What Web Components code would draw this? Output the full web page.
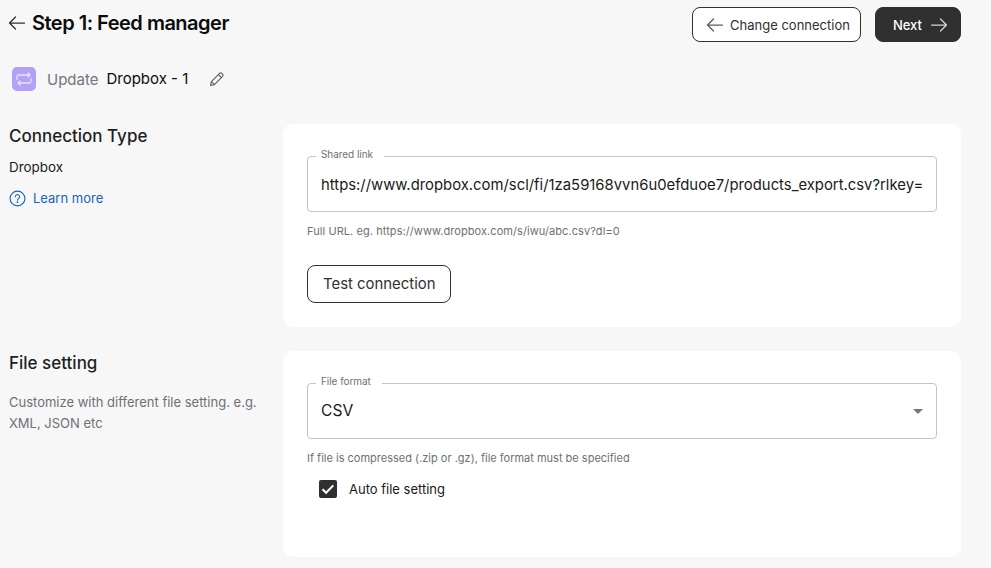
<!DOCTYPE html>
<html>
<head>
<meta charset="utf-8">
<style>
  html, body { margin: 0; background: #f7f7f7; }
  body { font-family: Inter, "Liberation Sans", sans-serif; color: #1a1a1a; }
</style>
</head>
<body>
<x-page>
  <x-topbar slot="top" title="Step 1: Feed manager"></x-topbar>
  <x-section heading="Connection Type" slot="sections">
    <div slot="side" style="font-size:13.4px;font-weight:400;line-height:18px;margin-top:10px;color:#1a1a1a">Dropbox</div>
    <x-learn-more slot="side"></x-learn-more>
    <x-field label="Shared link" notch="68" value="https://www.dropbox.com/scl/fi/1za59168vvn6u0efduoe7/products_export.csv?rlkey=" size="14.85" shift="2"></x-field>
    <x-help style="letter-spacing:.07px">Full URL. eg. https://www.dropbox.com/s/iwu/abc.csv?dl=0</x-help>
    <x-button style="margin-top:26px">Test connection</x-button>
  </x-section>
  <x-section heading="File setting" slot="sections" style="margin-top:24px" min="206">
    <div slot="side" style="font-size:13px;line-height:21px;margin-top:17px;color:#6d7175;width:256px">Customize with different file setting. e.g. XML, JSON etc</div>
    <x-field label="File format" notch="66" value="CSV" size="15.6" shift="-2" select></x-field>
    <x-help>If file is compressed (.zip or .gz), file format must be specified</x-help>
    <x-check>Auto file setting</x-check>
  </x-section>
</x-page>
<script>
const ARROW_LEFT = '<svg width="18" height="18" viewBox="0 0 18 18" fill="none" stroke="currentColor" stroke-width="1.25" stroke-linecap="round" stroke-linejoin="round"><path d="M16.5 9H1.5M7.5 3 1.5 9l6 6"/></svg>';
const ARROW_RIGHT = '<svg width="18" height="18" viewBox="0 0 18 18" fill="none" stroke="currentColor" stroke-width="1.25" stroke-linecap="round" stroke-linejoin="round"><path d="M1.5 9h15M10.5 3l6 6-6 6"/></svg>';

class XPage extends HTMLElement {
  constructor() {
    super();
    this.attachShadow({ mode: 'open' }).innerHTML = `
      <style>
        :host { display: block; padding: 0 30px 0 9px; }
      </style>
      <slot name="top"></slot>
      <slot name="sections"></slot>`;
  }
}

class XTopbar extends HTMLElement {
  constructor() {
    super();
    this.attachShadow({ mode: 'open' }).innerHTML = `
      <style>
        :host { display: block; height: 124px; }
        .row { display: flex; align-items: center; justify-content: space-between; padding-top: 7px; }
        .title { display: flex; align-items: center; gap: 6px; margin-left: -1px; color: #303030; position: relative; top: -1.5px; }
        .title svg { flex: none; }
        h1 { margin: 0; font-size: 20px; line-height: 33px; font-weight: 600; letter-spacing: -0.5px; color: #0c0c0c; }
        .actions { display: flex; gap: 14px; }
        .update { display: flex; align-items: center; height: 24px; margin: 25px 0 0 3px; }
        .badge { width: 24px; height: 24px; border-radius: 5px; background: #b5a0f7; display: grid; place-items: center; margin-right: 11px; }
        .verb { font-size: 15px; color: #77737f; margin-right: 8px; }
        .name { font-size: 15px; color: #0c0c0c; margin-right: 20px; position: relative; top: -1px; }
        .pencil { color: #5c5c5c; display: block; }
      </style>
      <div class="row">
        <div class="title">${ARROW_LEFT}<h1>${this.getAttribute('title')}</h1></div>
        <div class="actions">
          <x-button icon="left">Change connection</x-button>
          <x-button icon="right" dark>Next</x-button>
        </div>
      </div>
      <div class="update">
        <span class="badge">
          <svg width="18" height="18" viewBox="0 0 18 18" fill="none" stroke="#e9e2ff" stroke-width="1.3" stroke-linecap="round" stroke-linejoin="round"><path d="M2 9.5V6.5A1.5 1.5 0 0 1 3.5 5H15M13 3l2 2-2 2M16 8.5v3a1.5 1.5 0 0 1-1.5 1.5H3M5 11l-2 2 2 2"/></svg>
        </span>
        <span class="verb">Update</span>
        <span class="name">Dropbox - 1</span>
        <svg class="pencil" width="18" height="18" viewBox="0 0 18 18" fill="none" stroke="currentColor" stroke-width="1.1" stroke-linejoin="round" stroke-linecap="round"><path d="M2.5 15.5l.9-3.9 8.2-8.2a1.6 1.6 0 0 1 2.2 0l.8.8a1.6 1.6 0 0 1 0 2.2l-8.2 8.2zM10.4 4.6l3 3M3.4 11.6l3 3"/></svg>
      </div>`;
  }
}

class XButton extends HTMLElement {
  constructor() {
    super();
    const icon = this.getAttribute('icon');
    this.attachShadow({ mode: 'open' }).innerHTML = `
      <style>
        :host { display: inline-flex; }
        button { display: inline-flex; align-items: center; gap: 6px; height: 38px; padding: 0 15px; border: 1px solid #303030; border-radius: 8px; background: #fff; color: #303030; font: 400 14.9px/20px Inter, "Liberation Sans", sans-serif; white-space: nowrap; }
        button.icon { height: 35px; font-size: 13px; padding: 0 10px 0 13px; }
        button.dark { background: #303030; color: #fff; font-weight: 500; gap: 7.5px; padding: 0 12.5px 0 17px; }
        button.dark svg { color: #d4d4d4; }
        svg { color: #5c5c5c; }
      </style>
      <button class="${icon ? 'icon' : ''} ${this.hasAttribute('dark') ? 'dark' : ''}">
        ${icon === 'left' ? ARROW_LEFT : ''}<slot></slot>${icon === 'right' ? ARROW_RIGHT : ''}
      </button>`;
  }
}

class XSection extends HTMLElement {
  constructor() {
    super();
    const min = this.getAttribute('min');
    this.attachShadow({ mode: 'open' }).innerHTML = `
      <style>
        :host { display: grid; grid-template-columns: 274px 678px; }
        h2 { margin: 0; font-size: 17px; line-height: 24px; font-weight: 500; color: #1f1f1f; }
        .card { background: #fff; border-radius: 10px; padding: 32px 24px 24px; ${min ? `min-height: ${min}px; box-sizing: border-box;` : ''} }
      </style>
      <div class="side">
        <h2>${this.getAttribute('heading')}</h2>
        <slot name="side"></slot>
      </div>
      <div class="card"><slot></slot></div>`;
  }
}

class XLearnMore extends HTMLElement {
  constructor() {
    super();
    this.attachShadow({ mode: 'open' }).innerHTML = `
      <style>
        :host { display: flex; align-items: center; gap: 7px; margin-top: 13px; color: #1565c0; font-size: 13px; line-height: 18px; font-weight: 400; }
        svg { display: block; }
      </style>
      <svg width="17" height="17" viewBox="0 0 17 17" fill="none" stroke="currentColor" stroke-width="1.1" stroke-linecap="round"><circle cx="8.5" cy="8.5" r="7.4"/><path d="M6.4 6.7a2.1 2.1 0 1 1 3.2 1.8c-.7.4-1.1.9-1.1 1.7"/><circle cx="8.5" cy="12.2" r=".35" fill="currentColor"/></svg>
      <span>Learn more</span>`;
  }
}

class XField extends HTMLElement {
  constructor() {
    super();
    const select = this.hasAttribute('select');
    const size = this.getAttribute('size') || '16';
    const shift = Number(this.getAttribute('shift') || 0);
    this.attachShadow({ mode: 'open' }).innerHTML = `
      <style>
        :host { display: block; position: relative; }
        .box { display: flex; align-items: center; height: 56px; box-sizing: border-box; border: 1px solid #c4c4c4; border-radius: 4px; padding: 0 13px; font-size: ${size}px; color: #1a1a1a; }
        .value { flex: 1; white-space: nowrap; margin: ${Math.max(shift, 0)}px 0 ${Math.max(-shift, 0)}px; }
        label { position: absolute; left: 9px; top: -9px; width: ${this.getAttribute('notch')}px; box-sizing: border-box; padding-left: 5px; background: linear-gradient(transparent 8px, #fff 8px, #fff 11px, transparent 11px); font-size: 10px; line-height: 14px; letter-spacing: -0.05px; color: #6d7175; }
        .caret { width: 0; height: 0; border: 5px solid transparent; border-top-color: #757575; border-bottom: 0; }
      </style>
      <div class="box">
        <div class="value">${this.getAttribute('value')}</div>
        ${select ? '<div class="caret"></div>' : ''}
      </div>
      <label>${this.getAttribute('label')}</label>`;
  }
}

class XHelp extends HTMLElement {
  constructor() {
    super();
    this.attachShadow({ mode: 'open' }).innerHTML = `
      <style>
        :host { display: block; margin-top: 11px; font-size: 11px; line-height: 16px; color: #6d7175; }
      </style>
      <slot></slot>`;
  }
}

class XCheck extends HTMLElement {
  constructor() {
    super();
    this.attachShadow({ mode: 'open' }).innerHTML = `
      <style>
        :host { display: flex; align-items: center; gap: 12px; margin: 13px 0 0 12px; font-size: 13px; line-height: 20px; color: #1a1a1a; }
        .box { width: 18px; height: 18px; border-radius: 2px; background: #303030; display: grid; place-items: center; }
      </style>
      <span class="box">
        <svg width="16" height="16" viewBox="0 0 16 16" fill="none" stroke="#fff" stroke-width="2"><path d="M2.5 8.2l3.6 3.6 7.2-7.4"/></svg>
      </span>
      <slot></slot>`;
  }
}

customElements.define('x-button', XButton);
customElements.define('x-topbar', XTopbar);
customElements.define('x-section', XSection);
customElements.define('x-learn-more', XLearnMore);
customElements.define('x-field', XField);
customElements.define('x-help', XHelp);
customElements.define('x-check', XCheck);
customElements.define('x-page', XPage);
</script>
</body>
</html>
